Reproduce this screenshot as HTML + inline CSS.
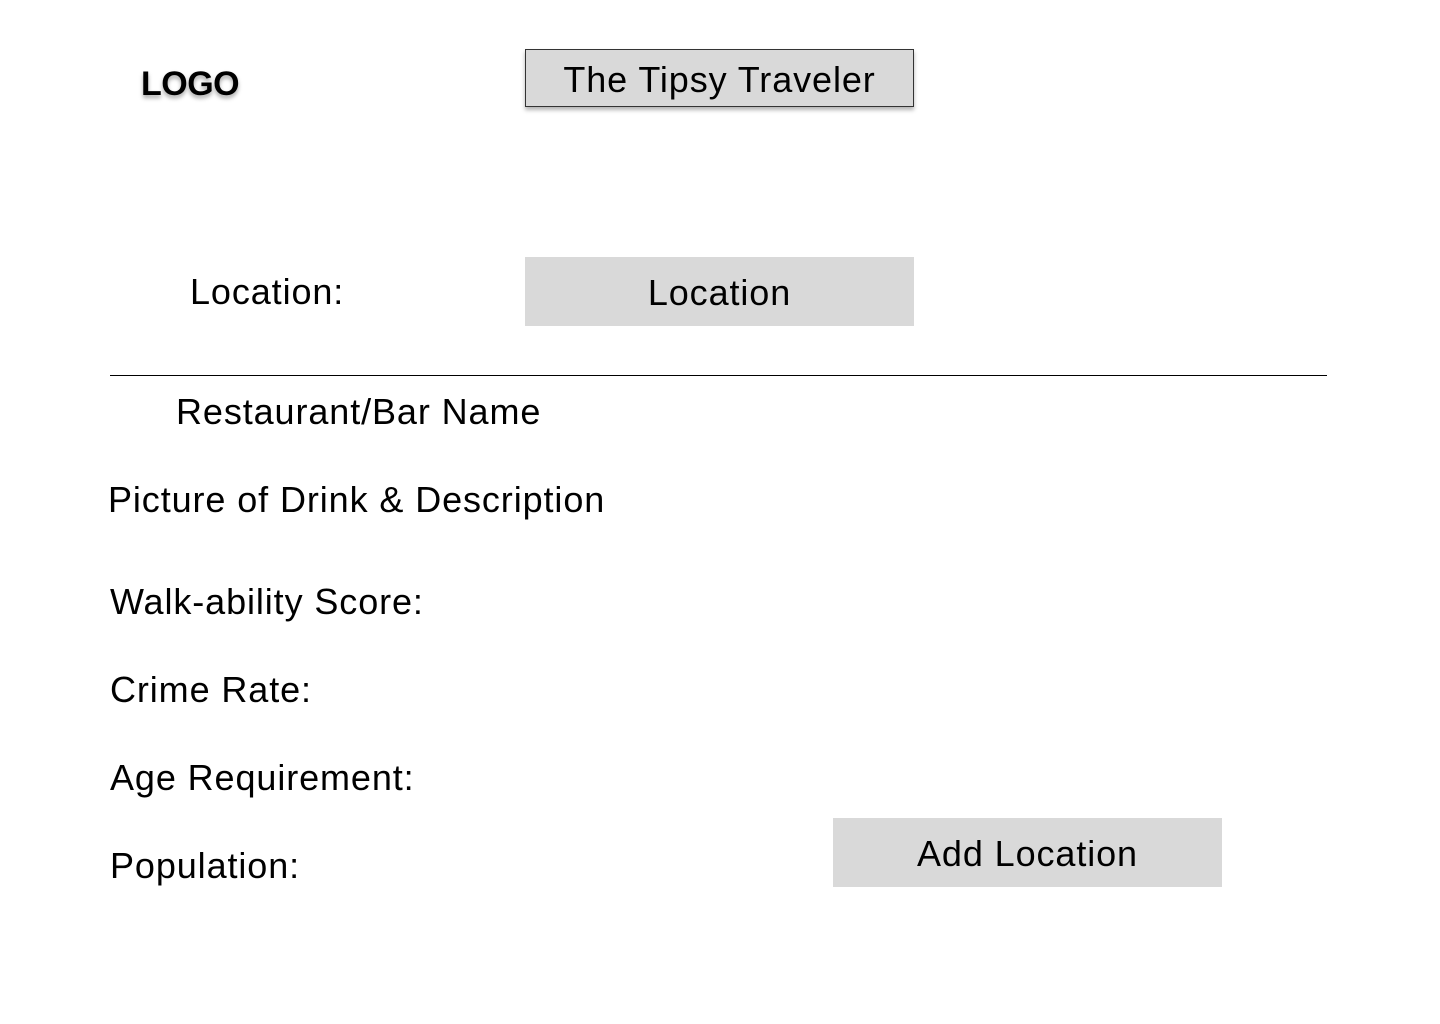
<!DOCTYPE html>
<html><head><style>
body{margin:0;width:1440px;height:1024px;background:#fff;position:relative;font-family:"Liberation Sans",sans-serif;color:#000;overflow:hidden}
.t{position:absolute;font-size:36px;letter-spacing:0.9px;line-height:40px;white-space:nowrap}
.box{position:absolute;background:#d9d9d9;text-align:center;font-size:36px;letter-spacing:0.9px;box-sizing:border-box}
</style></head><body>
<div class="t" style="left:141px;top:64px;font-weight:bold;font-size:34px;letter-spacing:-0.5px;text-shadow:0 3px 4px rgba(0,0,0,.35)">LOGO</div>
<div class="box" style="left:525px;top:49px;width:389px;height:58px;border:1px solid #333;line-height:59px;box-shadow:0 3px 4px rgba(0,0,0,.3)">The Tipsy Traveler</div>
<div class="t" style="left:190px;top:272px">Location:</div>
<div class="box" style="left:525px;top:257px;width:389px;height:69px;line-height:71px">Location</div>
<div style="position:absolute;left:110px;top:375px;width:1217px;height:1px;background:#000"></div>
<div class="t" style="left:176px;top:392px">Restaurant/Bar Name</div>
<div class="t" style="left:108px;top:480px">Picture of Drink &amp; Description</div>
<div class="t" style="left:110px;top:582px">Walk-ability Score:</div>
<div class="t" style="left:110px;top:670px">Crime Rate:</div>
<div class="t" style="left:110px;top:758px">Age Requirement:</div>
<div class="t" style="left:110px;top:846px">Population:</div>
<div class="box" style="left:833px;top:818px;width:389px;height:69px;line-height:71px">Add Location</div>
</body></html>
